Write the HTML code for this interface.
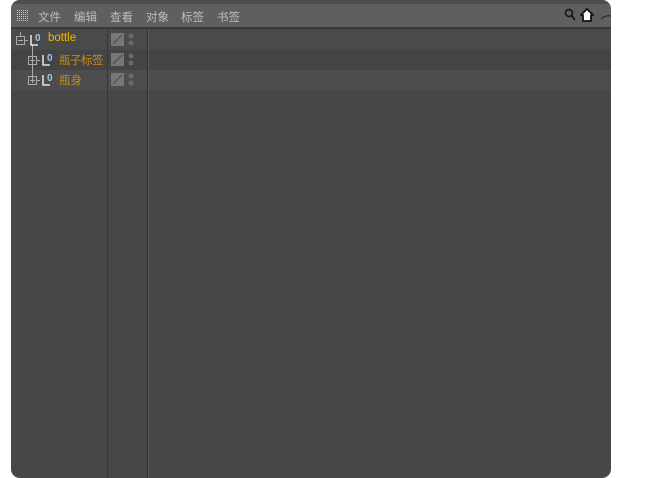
<!DOCTYPE html>
<html><head><meta charset="utf-8"><style>
body{margin:0;width:645px;height:478px;background:#fff;position:relative;overflow:hidden;font-family:"Liberation Sans","Noto Sans CJK SC",sans-serif;}
.win{position:absolute;left:11px;top:0;width:600px;height:478px;background:#474747;border-radius:9px;overflow:hidden;}
.top{position:absolute;left:0;top:0;width:600px;height:4px;background:#4e4e4e;}
.menu{position:absolute;left:0;top:4px;width:600px;height:23px;background:#5f5f5f;border-bottom:2px solid #3a3a3a;}
.menu span{position:absolute;top:5px;font-size:11.5px;color:#bdbdbd;}
.row{position:absolute;left:0;width:600px;height:20px;}
.vl{position:absolute;top:29px;bottom:0;width:1px;background:#363636;}
.name{position:absolute;font-size:11.5px;}
</style></head><body>
<div class="win">
<div class="top"></div>
<div class="menu">
<svg style="position:absolute;left:6px;top:6px" width="12" height="12"><defs><pattern id="p" width="2" height="2" patternUnits="userSpaceOnUse"><rect width="1" height="1" fill="#ccc"/></pattern></defs><rect width="12" height="12" fill="url(#p)"/></svg>
<span style="left:27px">文件</span><span style="left:63px">编辑</span><span style="left:99px">查看</span><span style="left:135px">对象</span><span style="left:170px">标签</span><span style="left:206px">书签</span>
<svg style="position:absolute;left:552px;top:3px" width="48" height="17"><circle cx="6" cy="6" r="3.5" fill="none" stroke="#111" stroke-width="1.5"/><line x1="8.5" y1="8.5" x2="12" y2="13" stroke="#111" stroke-width="1.8"/><path d="M24 2 L30 8 L28 8 L28 14 L20 14 L20 8 L18 8 Z" fill="#fff" stroke="#111" stroke-width="1.8" stroke-linejoin="round"/><path d="M38 12 Q42 8 48 9" fill="none" stroke="#222" stroke-width="1"/></svg>
</div>
<div class="row" style="top:30px;background:#4a4a4a"></div>
<div class="row" style="top:50px;background:#444"></div>
<div class="row" style="top:70px;background:#4d4d4d"></div>
<div class="vl" style="left:96px"></div>
<div class="vl" style="left:136px;background:#333"></div><div class="vl" style="left:137px;background:#555"></div>
<svg style="position:absolute;left:0;top:29px" width="96" height="62">
<g stroke="#aaa" fill="none" stroke-width="1">
<rect x="5.5" y="7.5" width="8" height="8"/><line x1="7" y1="11.5" x2="12" y2="11.5"/>
<line x1="9.5" y1="3" x2="9.5" y2="7"/><line x1="13.5" y1="11.5" x2="17" y2="11.5"/>
<line x1="21.5" y1="16" x2="21.5" y2="51"/>
<rect x="17.5" y="27.5" width="8" height="8"/><line x1="19" y1="31.5" x2="24" y2="31.5"/><line x1="21.5" y1="29" x2="21.5" y2="34"/><line x1="25.5" y1="31.5" x2="29" y2="31.5"/>
<rect x="17.5" y="47.5" width="8" height="8"/><line x1="19" y1="51.5" x2="24" y2="51.5"/><line x1="21.5" y1="49" x2="21.5" y2="54"/><line x1="25.5" y1="51.5" x2="29" y2="51.5"/>
</g>
<g stroke="#fff" fill="none" stroke-width="1.3">
<path d="M20 6 V16 H27"/><path d="M32 26 V36 H39"/><path d="M32 46 V56 H39"/>
</g>
<g fill="#9fc7ef" font-size="10" font-weight="bold" font-family="Liberation Sans"><text x="24" y="12">0</text><text x="36" y="32">0</text><text x="36" y="52">0</text></g>
</svg>
<div class="name" style="left:37px;top:32px;color:#f5b800">bottle</div>
<div class="name" style="left:48px;top:52px;color:#c88a10;letter-spacing:-0.5px">瓶子标签</div>
<div class="name" style="left:48px;top:72px;color:#c88a10">瓶身</div>
<svg style="position:absolute;left:100px;top:33px" width="26" height="56">
<g><rect width="13" height="13" fill="#777"/><line x1="2" y1="11" x2="11" y2="2" stroke="#555" stroke-width="1.5"/>
<circle cx="20" cy="3" r="2.5" fill="#6a6a6a"/><circle cx="20" cy="10" r="2.5" fill="#6a6a6a"/></g>
<g transform="translate(0,20)"><rect width="13" height="13" fill="#777"/><line x1="2" y1="11" x2="11" y2="2" stroke="#555" stroke-width="1.5"/>
<circle cx="20" cy="3" r="2.5" fill="#6a6a6a"/><circle cx="20" cy="10" r="2.5" fill="#6a6a6a"/></g>
<g transform="translate(0,40)"><rect width="13" height="13" fill="#777"/><line x1="2" y1="11" x2="11" y2="2" stroke="#555" stroke-width="1.5"/>
<circle cx="20" cy="3" r="2.5" fill="#6a6a6a"/><circle cx="20" cy="10" r="2.5" fill="#6a6a6a"/></g>
</svg>
</div>
</body></html>
